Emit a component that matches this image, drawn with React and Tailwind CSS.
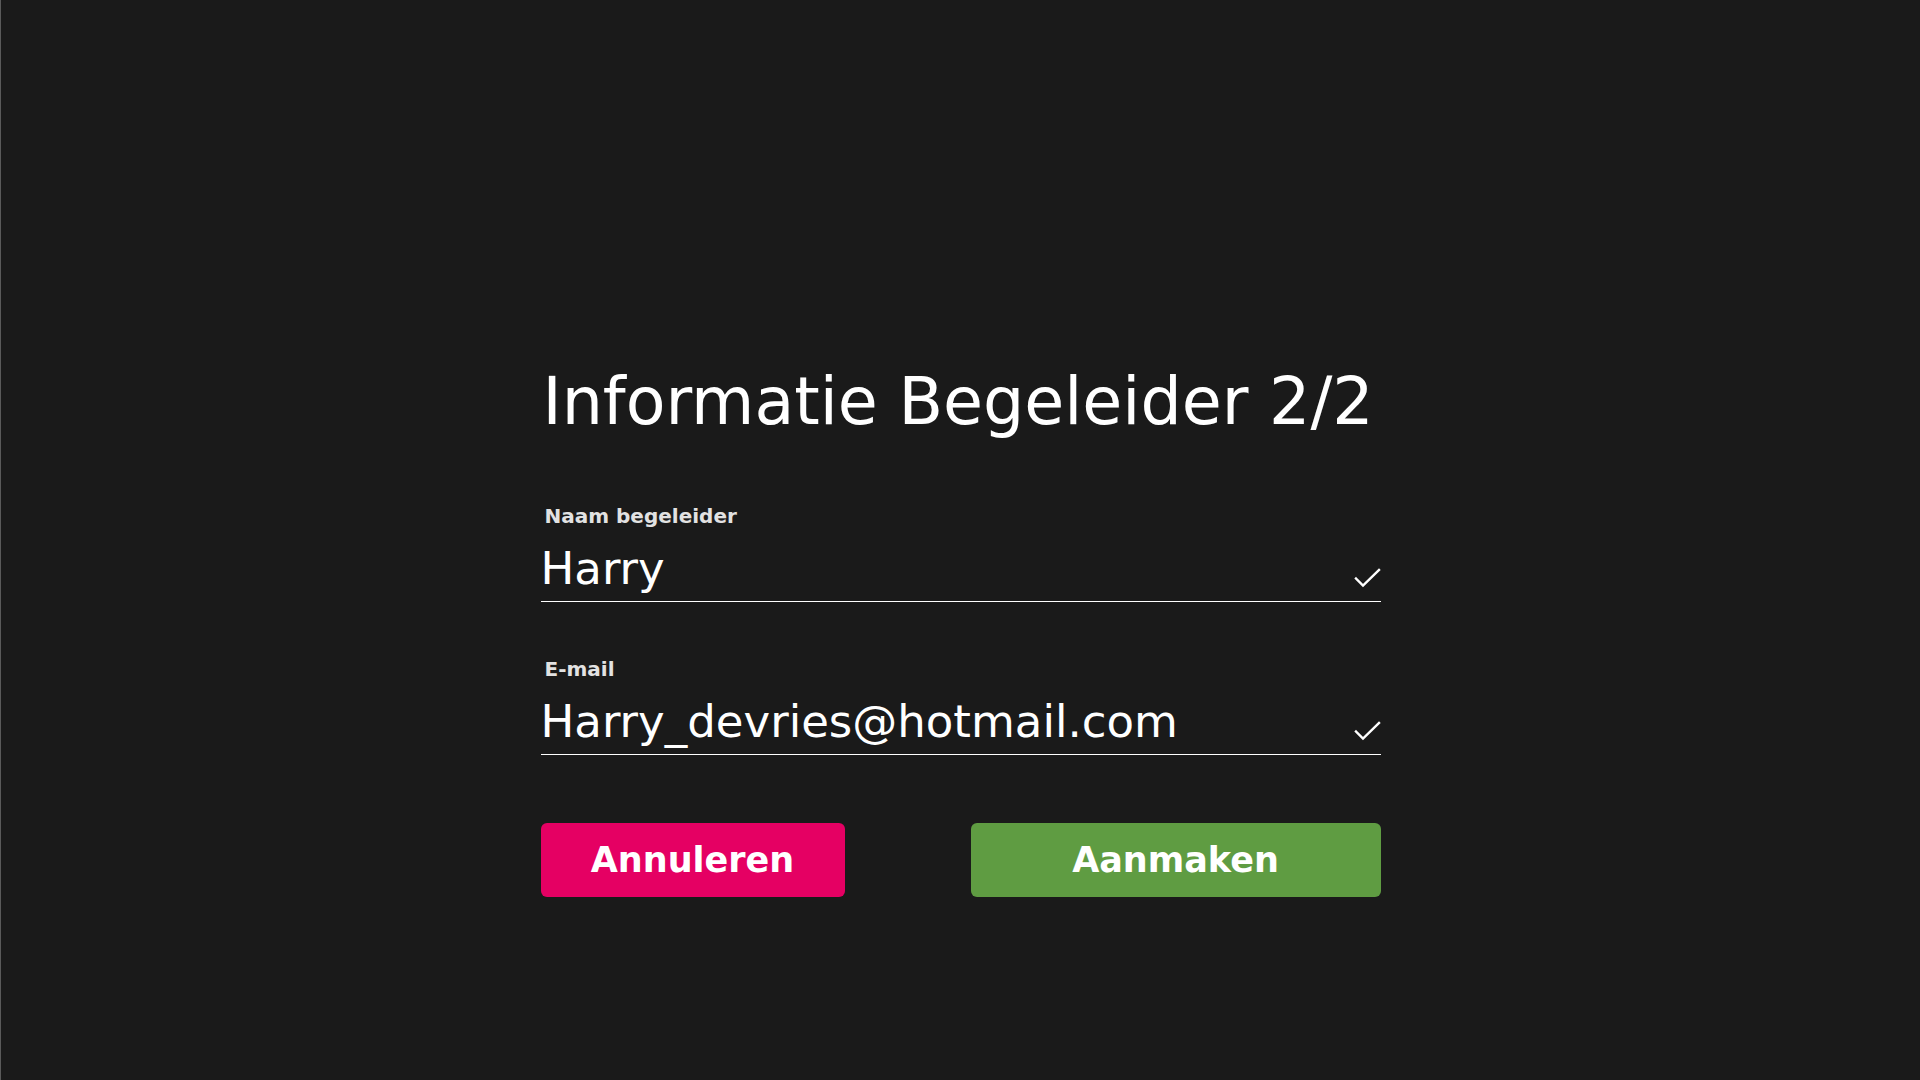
export default function App() {
  const fields = [
    { label: 'Naam begeleider', value: 'Harry' },
    { label: 'E-mail', value: 'Harry_devries@hotmail.com' },
  ];

  return (
    <div className="w-full h-screen bg-[#1a1a1a] border-l border-[#5a5a5a] overflow-hidden" style={{ fontFamily: '"DejaVu Sans", Verdana, sans-serif' }}>
      <div className="w-[840px] mx-auto pt-[369px]">
        <h1 className="text-[65px] leading-none text-white pl-[2px]">Informatie Begeleider 2/2</h1>

        <div className="mt-[72px] flex flex-col gap-[57px]">
          {fields.map((f) => (
            <div key={f.label}>
              <label className="block text-[20px] leading-none font-bold text-[#e2e2e2] pl-[4px]">{f.label}</label>
              <div className="mt-[20px] flex items-end justify-between border-b border-white pb-[10px]">
                <span className="text-[45px] leading-none text-white">{f.value}</span>
                <svg className="w-[28px] h-[20px] mb-[3px]" viewBox="0 0 28 20" fill="none" stroke="white" strokeWidth="2.4" strokeLinecap="square">
                  <path d="M3 10.5l7 7L26 2" />
                </svg>
              </div>
            </div>
          ))}
        </div>

        <div className="mt-[68px] flex justify-between">
          <button className="w-[304px] h-[74px] rounded-[6px] bg-[#e50063] text-white text-[35px] font-bold leading-none">Annuleren</button>
          <button className="w-[410px] h-[74px] rounded-[6px] bg-[#5f9c42] text-white text-[35px] font-bold leading-none">Aanmaken</button>
        </div>
      </div>
    </div>
  );
}
